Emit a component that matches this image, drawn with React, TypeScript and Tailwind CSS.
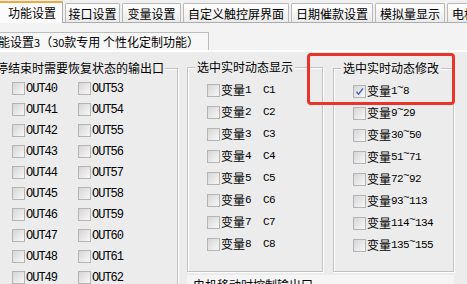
import React from "react";

const CJK = "font-['Noto_Sans_CJK_SC','Noto_Sans',sans-serif]";
const MONO = "font-['Liberation_Mono','DejaVu_Sans_Mono',monospace] text-[12px] tracking-[-1px]";
const MONO_S = "font-['Liberation_Mono','DejaVu_Sans_Mono',monospace] text-[11px] tracking-[-0.6px]";

function Box({ checked = false }: { checked?: boolean }) {
  return (
    <span className="relative inline-block h-[13px] w-[13px] shrink-0 border border-[#b4b4b4] bg-gradient-to-br from-[#d6d6d6] to-[#f8f8f8]">
      {checked && (
        <svg className="absolute left-0 top-0" width="11" height="11" viewBox="0 0 11 11">
          <path d="M2.5 5.8 L4.6 8.2 L9 2.4" fill="none" stroke="#3b5cc4" strokeWidth="1.3" />
        </svg>
      )}
    </span>
  );
}

const tabs = [
  { label: "接口设置", cls: "w-[55px]" },
  { label: "变量设置", cls: "w-[59px]" },
  { label: "自定义触控屏界面", cls: "w-[106px]" },
  { label: "日期催款设置", cls: "w-[82px]" },
  { label: "模拟量显示", cls: "w-[70px]" },
  { label: "电机移动设置", cls: "w-[82px]" },
];

const etched = "border border-[#c2c2c2] shadow-[inset_1px_1px_0_#ffffff,1px_1px_0_#ffffff]";

function Tilde() {
  return <span className="relative -top-[3px]">~</span>;
}

export default function App() {
  const outRows = Array.from({ length: 10 }, (_, i) => i);
  const vars = [1, 2, 3, 4, 5, 6, 7, 8];
  const ranges: [string, string][] = [
    ["1", "8"],
    ["9", "29"],
    ["30", "50"],
    ["51", "71"],
    ["72", "92"],
    ["93", "113"],
    ["114", "134"],
    ["135", "155"],
  ];

  return (
    <div className={`relative h-[284px] w-[467px] overflow-hidden bg-[#f0f0f0] text-[12px] leading-[16px] text-black ${CJK}`}>
      {/* main tab strip */}
      <div className="flex h-[23px] items-end gap-[2px] border-b border-[#acacac] bg-[#f0f0f0]">
        <div className="relative z-10 -mb-px flex h-[22px] w-[63px] shrink-0 items-center border-r border-[#acacac] bg-[#fbfbfb] pl-[8px] pt-[2px]">
          <div className="absolute left-0 right-0 top-0 h-[2px] bg-[#f2a83c]" />
          功能设置
        </div>
        {tabs.map((t) => (
          <div
            key={t.label}
            className={`flex h-[19px] shrink-0 items-center justify-center overflow-hidden whitespace-nowrap rounded-t-[2px] border border-b-0 border-[#b8b8b8] bg-gradient-to-b from-[#ffffff] to-[#ebebeb] pt-[1px] ${t.cls}`}
          >
            {t.label}
          </div>
        ))}
      </div>

      {/* sub tab row */}
      <div className="flex h-[27px] items-end bg-[#f3f3f3]">
        <div className="flex h-[18px] w-[209px] items-center overflow-hidden whitespace-nowrap border-r border-t border-[#bdbdbd] bg-[#f7f7f7] pt-[1px]">
          <span className="-ml-[2px]">能设置</span>
          <span className="text-[11px]">3</span>
          <span>（</span>
          <span className="text-[11px]">30</span>
          <span>款专用&nbsp;个性化定制功能）</span>
        </div>
      </div>
      <div className="h-[2px] bg-white" />

      {/* content */}
      <div className="flex items-start bg-[#ececec]">
        {/* group 1 */}
        <div className={`relative -ml-[12px] mt-[16px] h-[240px] w-[190px] shrink-0 ${etched}`}>
          <div className="absolute -top-[9px] left-[6px] whitespace-nowrap bg-[#ececec] px-px">
            停结束时需要恢复状态的输出口
          </div>
          <div className="grid grid-cols-[66px_1fr] pl-[23px] pt-[9px]">
            {outRows.map((i) => (
              <React.Fragment key={i}>
                <div className="flex h-[21px] items-center gap-[1px]">
                  <Box />
                  <span className={MONO}>OUT{40 + i}</span>
                </div>
                <div className="flex h-[21px] items-center gap-[1px]">
                  <Box />
                  <span className={MONO}>OUT{53 + i}</span>
                </div>
              </React.Fragment>
            ))}
          </div>
        </div>

        {/* right side */}
        <div className="ml-[9px] flex flex-col">
          <div className="flex items-start">
            {/* group 2 */}
            <div className={`relative mt-[15px] h-[205px] w-[136px] shrink-0 ${etched}`}>
              <div className="absolute -top-[9px] left-[7px] whitespace-nowrap bg-[#ececec] px-[2px]">
                选中实时动态显示
              </div>
              <div className="flex flex-col pl-[19px] pt-[11px]">
                {vars.map((v) => (
                  <div key={v} className="flex h-[22px] items-center">
                    <Box />
                    <span className="ml-[1px] flex w-[42px] items-center">
                      变量<span className={MONO_S}>{v}</span>
                    </span>
                    <span className={MONO_S}>C{v}</span>
                  </div>
                ))}
              </div>
            </div>

            {/* group 3 */}
            <div className={`relative ml-[10px] mt-[16px] h-[204px] w-[121px] shrink-0 ${etched}`}>
              <div className="absolute -top-[9px] left-[7px] whitespace-nowrap bg-[#ececec] px-[2px]">
                选中实时动态修改
              </div>
              <div className="flex flex-col pl-[19px] pt-[11px]">
                {ranges.map(([a, b], idx) => (
                  <div key={a} className="flex h-[22px] items-center">
                    <Box checked={idx === 0} />
                    <span className="ml-[1px] flex items-center">
                      变量
                      <span className={MONO_S}>
                        {a}
                        <Tilde />
                        {b}
                      </span>
                    </span>
                  </div>
                ))}
              </div>
            </div>
          </div>

          {/* group 4 (cut off) */}
          <div className="mt-[3px] h-[20px] w-[267px] bg-[#f5f5f5] pl-[6px] pt-[2px]">电机移动时控制输出口</div>
        </div>
      </div>

      {/* red highlight annotation */}
      <div className="absolute left-[307px] top-[53px] h-[52px] w-[148px] rounded-[4px] border-[3px] border-[#e8352c]" />
    </div>
  );
}
